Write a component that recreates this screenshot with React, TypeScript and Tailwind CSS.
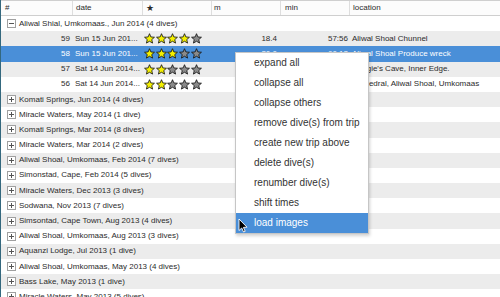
import React from "react";

const COLS = "grid grid-cols-[71px_70px_69px_69px_69px_152px]";

function Star({ on }: { on: boolean }) {
  return (
    <svg width="11" height="11" viewBox="0 0 24 24" className="block">
      <polygon
        points="12,1.5 15,8.6 22.8,9.3 16.9,14.4 18.7,22 12,18 5.3,22 7.1,14.4 1.2,9.3 9,8.6"
        fill={on ? "#f4f000" : "#8a8a8a"}
        stroke="#111"
        strokeWidth="1.8"
        strokeLinejoin="round"
      />
    </svg>
  );
}

function Stars({ n }: { n: number }) {
  return (
    <div className="flex items-center gap-[0.7px] pl-[2px]">
      {[0, 1, 2, 3, 4].map((i) => (
        <Star key={i} on={i < n} />
      ))}
    </div>
  );
}

function Expander({ open }: { open: boolean }) {
  return (
    <div className="w-[9px] h-[9px] border border-[#a0a0a0] bg-white flex items-center justify-center mr-[3px] ml-[6px] shrink-0">
      <svg width="7" height="7" viewBox="0 0 7 7">
        <line x1="1" y1="3.5" x2="6" y2="3.5" stroke="#555" strokeWidth="1" />
        {!open && <line x1="3.5" y1="1" x2="3.5" y2="6" stroke="#555" strokeWidth="1" />}
      </svg>
    </div>
  );
}

type Dive = { n: number; date: string; stars: number; m: string; min: string; loc: string };

const dives: Dive[] = [
  { n: 59, date: "Sun 15 Jun 201...", stars: 4, m: "18.4", min: "57:56", loc: "Aliwal Shoal Chunnel" },
  { n: 58, date: "Sun 15 Jun 201...", stars: 3, m: "20.0", min: "60:12", loc: "Aliwal Shoal Produce wreck" },
  { n: 57, date: "Sat 14 Jun 2014...", stars: 2, m: "", min: "", loc: "Raggie's Cave, Inner Edge." },
  { n: 56, date: "Sat 14 Jun 2014...", stars: 2, m: "", min: "", loc: "Cathedral, Aliwal Shoal, Umkomaas" },
];

const trips = [
  "Komati Springs, Jun 2014 (4 dives)",
  "Miracle Waters, May 2014 (1 dive)",
  "Komati Springs, Mar 2014 (8 dives)",
  "Miracle Waters, Mar 2014 (2 dives)",
  "Aliwal Shoal, Umkomaas, Feb 2014 (7 dives)",
  "Simonstad, Cape, Feb 2014 (5 dives)",
  "Miracle Waters, Dec 2013 (3 dives)",
  "Sodwana, Nov 2013 (7 dives)",
  "Simsontad, Cape Town, Aug 2013 (4 dives)",
  "Aliwal Shoal, Umkomaas, Aug 2013 (3 dives)",
  "Aquanzi Lodge, Jul 2013 (1 dive)",
  "Aliwal Shoal, Umkomaas, May 2013 (4 dives)",
  "Bass Lake, May 2013 (1 dive)",
  "Miracle Waters, May 2013 (5 dives)",
];

const menu = [
  "expand all",
  "collapse all",
  "collapse others",
  "remove dive(s) from trip",
  "create new trip above",
  "delete dive(s)",
  "renumber dive(s)",
  "shift times",
  "load images",
];

export default function App() {
  return (
    <div
      className="relative w-[500px] h-[297px] overflow-hidden bg-white text-[#2b2b2b] border-l border-[#34687e]"
      style={{ fontFamily: '"Liberation Sans", Arial, sans-serif' }}
    >
      {/* header */}
      <div className={`${COLS} h-[16px] border-t border-b border-[#cfcfcf] bg-[#fcfcfc] text-[8px] leading-none`}>
        <div className="pl-[4px] flex items-center">#</div>
        <div className="pl-[3px] flex items-center border-l border-[#dedede]">date</div>
        <div className="pl-[3px] flex items-center border-l border-[#dedede] text-[9px]">★</div>
        <div className="pl-[2px] flex items-center border-l border-[#dedede]">m</div>
        <div className="pl-[4px] flex items-center border-l border-[#dedede]">min</div>
        <div className="pl-[3px] flex items-center border-l border-[#dedede]">location</div>
      </div>

      {/* expanded trip */}
      <div className="h-[15.2px] flex items-center bg-white text-[8px] leading-none">
        <Expander open />
        <span>Aliwal Shial, Umkomaas., Jun 2014 (4 dives)</span>
      </div>

      {dives.map((d, i) => {
        const sel = i === 1;
        const bg = sel ? "bg-[#4a8fd8] text-white" : i % 2 === 0 ? "bg-[#ececec]" : "bg-white";
        return (
          <div key={d.n} className={`${COLS} h-[15.2px] text-[8px] leading-none items-center whitespace-nowrap ${bg}`}>
            <div className="text-right pr-[2px]">{d.n}</div>
            <div className="pl-[3px] overflow-hidden">{d.date}</div>
            <Stars n={d.stars} />
            <div className="text-right pr-[3px]">{d.m}</div>
            <div className="text-right pr-[1px]">{d.min}</div>
            <div className="pl-[3px] overflow-hidden">{d.loc}</div>
          </div>
        );
      })}

      {trips.map((t, i) => (
        <div
          key={t}
          className={`h-[15.2px] flex items-center text-[8px] leading-none whitespace-nowrap ${i % 2 === 0 ? "bg-[#ececec]" : "bg-white"}`}
        >
          <Expander open={false} />
          <span>{t}</span>
        </div>
      ))}

      {/* context menu */}
      <div className="absolute left-[234px] top-[52px] w-[134px] bg-white border border-[#c6c6c6] shadow-[1px_2px_3px_rgba(0,0,0,0.18)] text-[10px] leading-none text-[#333]">
        {menu.map((m, i) => (
          <div
            key={m}
            className={`h-[20px] flex items-center pl-[18px] whitespace-nowrap ${i === menu.length - 1 ? "bg-[#4a8fd8] text-white" : ""}`}
          >
            {m}
          </div>
        ))}
      </div>

      {/* mouse cursor */}
      <svg className="absolute left-[237px] top-[218px]" width="10" height="15" viewBox="0 0 10 15">
        <path d="M1 1 L1 12.5 L3.7 10 L5.6 14 L7.2 13.3 L5.4 9.4 L9 9.2 Z" fill="#000" stroke="#fff" strokeWidth="0.9" strokeLinejoin="round" />
      </svg>
    </div>
  );
}
